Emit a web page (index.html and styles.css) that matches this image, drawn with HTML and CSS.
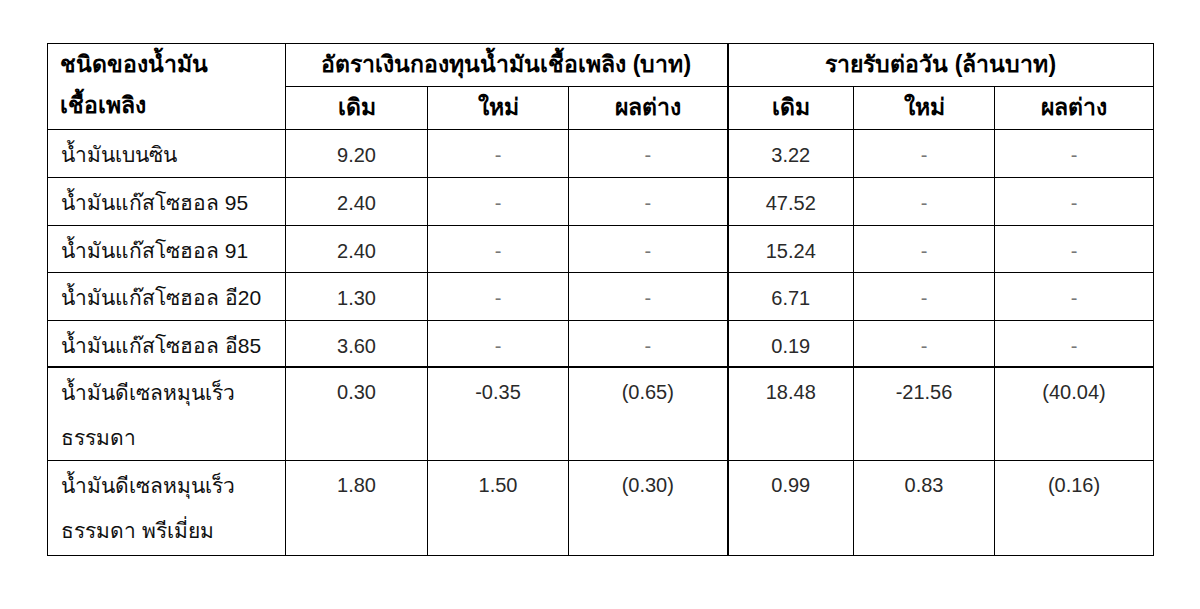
FILE: index.html
```html
<!DOCTYPE html>
<html lang="th">
<head>
<meta charset="utf-8">
<link rel="stylesheet" href="styles.css">
</head>
<body>
<table class="fund">
  <colgroup>
    <col class="c-name">
    <col class="c-a">
    <col class="c-b">
    <col class="c-c">
    <col class="c-d">
    <col class="c-e">
    <col class="c-f">
  </colgroup>
  <thead>
    <tr class="h1">
      <th class="name" rowspan="2">ชนิดของน้ำมัน<br>เชื้อเพลิง</th>
      <th colspan="3">อัตราเงินกองทุนน้ำมันเชื้อเพลิง (บาท)</th>
      <th class="split" colspan="3">รายรับต่อวัน (ล้านบาท)</th>
    </tr>
    <tr class="h2">
      <th>เดิม</th>
      <th>ใหม่</th>
      <th>ผลต่าง</th>
      <th class="split">เดิม</th>
      <th>ใหม่</th>
      <th>ผลต่าง</th>
    </tr>
  </thead>
  <tbody>
    <tr class="r48">
      <td class="name">น้ำมันเบนซิน</td>
      <td>9.20</td><td class="dash">-</td><td class="dash">-</td>
      <td class="split">3.22</td><td class="dash">-</td><td class="dash">-</td>
    </tr>
    <tr class="r48">
      <td class="name">น้ำมันแก๊สโซฮอล 95</td>
      <td>2.40</td><td class="dash">-</td><td class="dash">-</td>
      <td class="split">47.52</td><td class="dash">-</td><td class="dash">-</td>
    </tr>
    <tr class="r47">
      <td class="name">น้ำมันแก๊สโซฮอล 91</td>
      <td>2.40</td><td class="dash">-</td><td class="dash">-</td>
      <td class="split">15.24</td><td class="dash">-</td><td class="dash">-</td>
    </tr>
    <tr class="r48">
      <td class="name">น้ำมันแก๊สโซฮอล อี20</td>
      <td>1.30</td><td class="dash">-</td><td class="dash">-</td>
      <td class="split">6.71</td><td class="dash">-</td><td class="dash">-</td>
    </tr>
    <tr class="r46">
      <td class="name">น้ำมันแก๊สโซฮอล อี85</td>
      <td>3.60</td><td class="dash">-</td><td class="dash">-</td>
      <td class="split">0.19</td><td class="dash">-</td><td class="dash">-</td>
    </tr>
    <tr class="r94 thick">
      <td class="name">น้ำมันดีเซลหมุนเร็ว<br>ธรรมดา</td>
      <td>0.30</td><td>-0.35</td><td>(0.65)</td>
      <td class="split">18.48</td><td>-21.56</td><td>(40.04)</td>
    </tr>
    <tr class="r95">
      <td class="name">น้ำมันดีเซลหมุนเร็ว<br>ธรรมดา พรีเมี่ยม</td>
      <td>1.80</td><td>1.50</td><td>(0.30)</td>
      <td class="split">0.99</td><td>0.83</td><td>(0.16)</td>
    </tr>
  </tbody>
</table>
</body>
</html>
```

FILE: styles.css
```css
html, body {
  margin: 0;
  padding: 0;
  background: #ffffff;
}

body {
  padding: 43px 0 0 47px;
  font-family: "Liberation Sans", Arial, sans-serif;
}

.fund {
  border-collapse: collapse;
  table-layout: fixed;
  width: 1106px;
  font-size: 20px;
  color: #2a2a2a;
}

.c-name { width: 238px; }
.c-a { width: 142px; }
.c-b { width: 141px; }
.c-c { width: 159px; }
.c-d { width: 126px; }
.c-e { width: 141px; }
.c-f { width: 159px; }

.fund th,
.fund td {
  border: 1px solid #000;
  padding: 6px 0 0 0;
  line-height: 38px;
  vertical-align: top;
  text-align: center;
  box-sizing: border-box;
}

.fund th {
  font-weight: bold;
  font-size: 23px;
  color: #000;
  line-height: 41px;
  padding-top: 0;
}

.fund .name {
  text-align: left;
  padding-left: 13px;
  font-size: 21px;
  color: #111;
}

.fund th.name {
  font-size: 23px;
  padding-left: 12px;
  color: #000;
}

.fund .split {
  border-left: 2px solid #000;
}

.fund .thick td {
  border-top: 2px solid #000;
}

.fund .dash {
  color: #777;
}

.h1, .h2 { height: 43px; }
.r48 { height: 48px; }
.r47 { height: 47px; }
.r46 { height: 46px; }
.r94 { height: 94px; }
.r95 { height: 95px; }

.fund .r94 td,
.fund .r95 td {
  line-height: 45px;
  padding-top: 2px;
}
```
